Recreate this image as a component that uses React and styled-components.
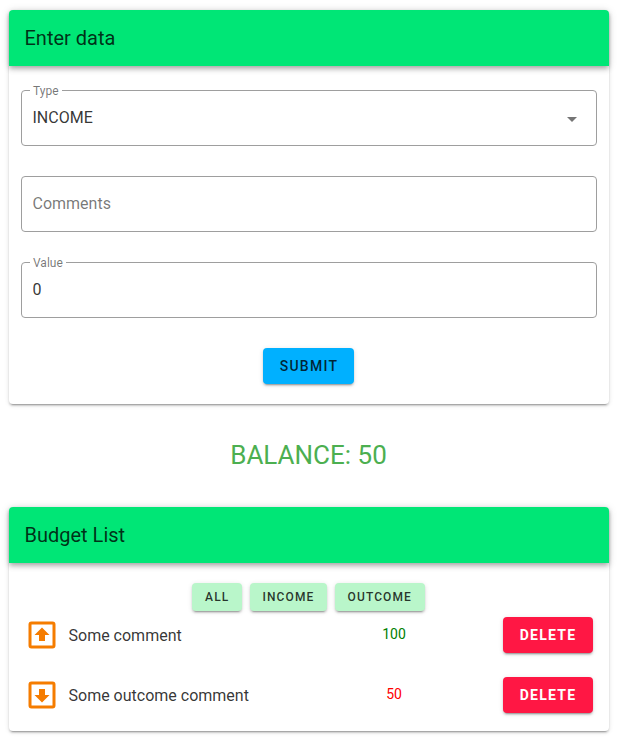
import React from 'react';
import styled, { createGlobalStyle } from 'styled-components';

const GlobalStyle = createGlobalStyle`
  *, *::before, *::after { box-sizing: border-box; }
  body {
    margin: 0;
    background: #fff;
    color: rgba(0, 0, 0, 0.8);
    font-family: Roboto, sans-serif;
    font-size: 16px;
    line-height: 24px;
  }
  button, input { font-family: inherit; }
`;

const Page = styled.main`
  width: 619px;
  height: 743px;
  padding: 10px 10px 0 9px;
  overflow: hidden;
`;

const Card = styled.section`
  height: ${(p) => p.$height}px;
  border-radius: 4px;
  background: #fff;
  box-shadow: 0 3px 1px -2px rgba(0, 0, 0, 0.2), 0 2px 2px 0 rgba(0, 0, 0, 0.14),
    0 1px 5px 0 rgba(0, 0, 0, 0.12);
`;

const Toolbar = styled.header`
  display: flex;
  align-items: center;
  height: 56px;
  padding: 0 15.5px;
  border-radius: 4px 4px 0 0;
  background: #00e676;
  box-shadow: 0 2px 4px -1px rgba(0, 0, 0, 0.2), 0 4px 5px 0 rgba(0, 0, 0, 0.14),
    0 1px 10px 0 rgba(0, 0, 0, 0.12);
`;

const Title = styled.h1`
  margin: 0;
  font-size: 20px;
  font-weight: 400;
  line-height: 30px;
`;

const Form = styled.form`
  display: flex;
  flex-direction: column;
  align-items: center;
  gap: 30px;
  padding: 24px 12px 0;
`;

const Outline = styled.fieldset`
  display: flex;
  align-items: center;
  width: 100%;
  height: ${(p) => (p.$labelled ? 62 : 56)}px;
  min-width: 0;
  margin: ${(p) => (p.$labelled ? '-6px' : '0')} 0 0;
  padding: 0 12px 0 10.5px;
  border: 1px solid #9e9e9e;
  border-radius: 4px;
`;

const Legend = styled.legend`
  height: 12px;
  margin-left: -2.5px;
  padding: 0 3px;
  color: rgba(0, 0, 0, 0.54);
  font-size: 12px;
  line-height: 15px;
`;

const FieldBody = styled.div`
  display: flex;
  align-items: center;
  width: 100%;
  height: ${(p) => (p.$labelled ? 49 : 54)}px;
  padding-bottom: ${(p) => (p.$labelled ? 6 : 2)}px;
`;

const Input = styled.input`
  flex: 1;
  min-width: 0;
  height: 32px;
  padding: 0;
  border: 0;
  outline: 0;
  background: transparent;
  color: rgba(0, 0, 0, 0.8);
  font-size: 16px;
  &::placeholder { color: rgba(0, 0, 0, 0.54); opacity: 1; }
`;

const Caret = styled.svg`
  width: 24px;
  height: 24px;
  margin-top: 2px;
  fill: rgba(0, 0, 0, 0.54);
`;

const Button = styled.button`
  height: 36px;
  padding: 0;
  border: 0;
  border-radius: 4px;
  background: ${(p) => p.$fill};
  color: ${(p) => p.$ink || 'rgba(0, 0, 0, 0.8)'};
  font-size: 14px;
  font-weight: ${(p) => p.$weight || 500};
  letter-spacing: 1.25px;
  line-height: 20px;
  text-transform: uppercase;
  box-shadow: 0 3px 1px -2px rgba(0, 0, 0, 0.2), 0 2px 2px 0 rgba(0, 0, 0, 0.14),
    0 1px 5px 0 rgba(0, 0, 0, 0.12);
`;

const SubmitButton = styled(Button)`
  width: 91px;
  margin-right: 1px;
  padding-left: 1px;
`;

const DeleteButton = styled(Button)`
  width: 90px;
`;

const FilterButton = styled(Button)`
  height: 28px;
  padding: 0 12.6px;
  font-size: 12px;
  letter-spacing: 1.1px;
`;

const Balance = styled.h2`
  display: flex;
  align-items: center;
  justify-content: center;
  height: 103px;
  margin: 0;
  padding: 0 1px 2px 0;
  color: #4caf50;
  font-size: 26px;
  font-weight: 400;
`;

const Filters = styled.nav`
  display: flex;
  justify-content: center;
  gap: 8px;
  padding: 20px 1px 0 0;
`;

const List = styled.ul`
  display: grid;
  grid-auto-rows: 60px;
  margin: -6px 0 0;
  padding: 0 16px 0 15.5px;
  list-style: none;
`;

const Entry = styled.li`
  display: grid;
  grid-template-columns: 44px 1fr 60px 169px;
  align-items: center;
`;

const EntryIcon = styled.svg`
  width: 36px;
  height: 36px;
  margin: -1px 0 0 -0.5px;
  fill: #f57c00;
`;

const Comment = styled.span`
  padding-top: 1px;
`;

const Amount = styled.span`
  margin-bottom: 2px;
  color: ${(p) => (p.$negative ? '#ff0000' : '#008000')};
  font-size: 14px;
  line-height: 20px;
  text-align: center;
`;

const Action = styled.div`
  display: flex;
  justify-content: flex-end;
`;

const BOX =
  'M19 21H5a2 2 0 0 1-2-2V5a2 2 0 0 1 2-2h14a2 2 0 0 1 2 2v14a2 2 0 0 1-2 2m0-2V5H5v14z';
const UP = 'M12 7l-5 5h3v4h4v-4h3z';
const DOWN = 'M12 17l5-5h-3V8h-4v4H7z';

const entries = [
  { text: 'Some comment', value: 100, outcome: false },
  { text: 'Some outcome comment', value: 50, outcome: true },
];

function Field({ label, value, placeholder, select }) {
  return (
    <Outline $labelled={!!label}>
      {label && <Legend>{label}</Legend>}
      <FieldBody $labelled={!!label}>
        <Input defaultValue={value} placeholder={placeholder} readOnly={select} aria-label={label || placeholder} />
        {select && (
          <Caret viewBox="0 0 24 24">
            <path d="M7 10l5 5 5-5z" />
          </Caret>
        )}
      </FieldBody>
    </Outline>
  );
}

export default function App() {
  return (
    <>
      <GlobalStyle />
      <Page>
        <Card $height={394}>
          <Toolbar>
            <Title>Enter data</Title>
          </Toolbar>
          <Form>
            <Field label="Type" value="INCOME" select />
            <Field placeholder="Comments" />
            <Field label="Value" value="0" />
            <SubmitButton type="button" $fill="#00b0ff">Submit</SubmitButton>
          </Form>
        </Card>
        <Balance>BALANCE: 50</Balance>
        <Card $height={224}>
          <Toolbar>
            <Title>Budget List</Title>
          </Toolbar>
          <Filters>
            {['All', 'Income', 'Outcome'].map((name) => (
              <FilterButton key={name} $fill="#b9f6ca">{name}</FilterButton>
            ))}
          </Filters>
          <List>
            {entries.map((e) => (
              <Entry key={e.text}>
                <EntryIcon viewBox="0 0 24 24">
                  <path d={BOX} />
                  <path d={e.outcome ? DOWN : UP} />
                </EntryIcon>
                <Comment>{e.text}</Comment>
                <Amount $negative={e.outcome}>{e.value}</Amount>
                <Action>
                  <DeleteButton $fill="#ff1744" $ink="#fff" $weight={700}>Delete</DeleteButton>
                </Action>
              </Entry>
            ))}
          </List>
        </Card>
      </Page>
    </>
  );
}
